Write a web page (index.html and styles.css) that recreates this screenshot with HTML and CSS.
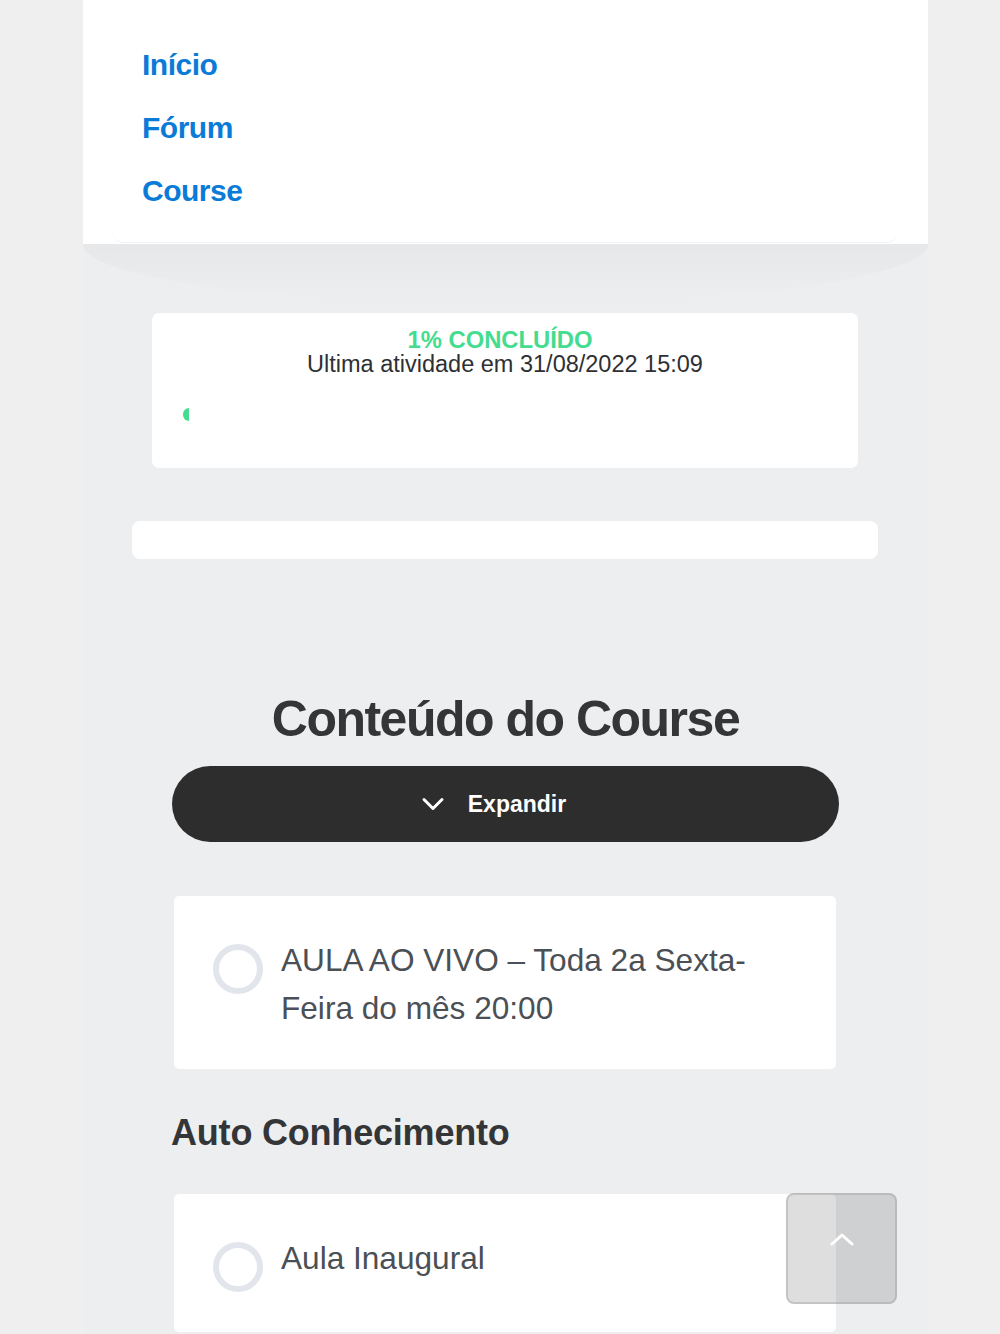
FILE: index.html
```html
<!DOCTYPE html>
<html lang="pt-BR">
<head>
<meta charset="UTF-8">
<meta name="viewport" content="width=device-width, initial-scale=1.0">
<title>Conteúdo do Course</title>
<link rel="stylesheet" href="styles.css">
</head>
<body>
<div id="page">
    <header class="topbar">
        <nav class="menu">
            <a href="javascript:;">Início</a>
            <a href="javascript:;">Fórum</a>
            <a href="javascript:;">Course</a>
        </nav>
    </header>

    <section class="progress-card">
        <p class="progress-pct">1% CONCLUÍDO</p>
        <p class="progress-last">Ultima atividade em 31/08/2022 15:09</p>
        <div class="progress-track">
            <div class="progress-fill" style="width: 1%"></div>
        </div>
    </section>

    <div class="blank-bar"></div>

    <h2 class="content-title">Conteúdo do Course</h2>
    <button class="expand-btn" type="button">
        <svg width="24" height="16" viewBox="0 0 24 16">
            <path d="M3 3.5 L12 12.5 L21 3.5" fill="none" stroke="#fff" stroke-width="3" stroke-linecap="round" stroke-linejoin="round"/>
        </svg>
        <span>Expandir</span>
    </button>

    <ul class="lessons">
        <li class="lesson">
            <span class="ring"></span>
            <span class="lesson-name">AULA AO VIVO – Toda 2a Sexta-Feira do mês 20:00</span>
        </li>
        <li class="section-title">Auto Conhecimento</li>
        <li class="lesson">
            <span class="ring"></span>
            <span class="lesson-name">Aula Inaugural</span>
        </li>
    </ul>
</div>
<a href="javascript:;" class="to-top">
    <svg width="26" height="14" viewBox="0 0 26 14">
        <path d="M3 12 L13 3 L23 12" fill="none" stroke="#fff" stroke-width="3" stroke-linecap="round" stroke-linejoin="round"/>
    </svg>
</a>
</body>
</html>
```

FILE: styles.css
```css
body {
    margin: 0;
    background: #efefef;
    font-family: "Liberation Sans", Arial, sans-serif;
}
p {
    margin: 0;
}
ul {
    margin: 0;
    padding: 0;
    list-style: none;
}
#page {
    width: 845px;
    min-height: 1334px;
    margin-left: 83px;
    padding-bottom: 40px;
    background: #edeef0;
    overflow: hidden;
}
.topbar {
    position: relative;
    background: #fff;
    padding: 13px 31px 1px 30px;
}
/* soft shade under the menu */
.topbar::after {
    content: "";
    position: absolute;
    left: 0;
    right: 0;
    top: 100%;
    height: 60px;
    background: linear-gradient(rgba(0, 0, 0, .026), rgba(0, 0, 0, 0));
    border-radius: 0 0 50% 50% / 0 0 100% 100%;
}
.menu {
    background: #fff;
    border-radius: 0 0 10px 10px;
    padding: 20px 29px;
    border-bottom: 1px solid #f1f2f3;
}
.menu a {
    display: block;
    font-size: 30px;
    line-height: 63px;
    font-weight: bold;
    letter-spacing: -.5px;
    color: #0b7bd8;
    text-decoration: none;
}
.progress-card {
    margin: 69px 70px 0 69px;
    padding: 14px 31px 47px;
    background: #fff;
    border-radius: 7px;
    text-align: center;
}
.progress-pct {
    padding-right: 10px;
    font-size: 23.8px;
    line-height: 25px;
    font-weight: bold;
    color: #44dc8e;
}
.progress-last {
    font-size: 23.5px;
    line-height: 25px;
    color: #2e3033;
}
.progress-track {
    margin-top: 31px;
    height: 13px;
}
.progress-fill {
    height: 13px;
    background: #44dc8e;
    border-radius: 7px 0 0 7px;
}
.blank-bar {
    margin: 53px 50px 0 49px;
    height: 38px;
    background: #fff;
    border-radius: 8px;
}
.content-title {
    margin: 130px 0 0;
    font-size: 50px;
    line-height: 60px;
    letter-spacing: -1.5px;
    color: #333537;
    text-align: center;
}
.expand-btn {
    display: flex;
    align-items: center;
    justify-content: center;
    gap: 23px;
    width: 667px;
    height: 76px;
    margin: 17px 0 0 89px;
    padding: 0 24px 0 0;
    border: 0;
    border-radius: 38px;
    background: #2d2d2e;
    color: #fff;
    font: bold 23px "Liberation Sans", Arial, sans-serif;
    cursor: pointer;
}
.lessons {
    margin: 54px 92px 0 91px;
}
.lesson {
    display: flex;
    align-items: flex-start;
    gap: 18px;
    min-height: 138px;
    box-sizing: border-box;
    padding: 40px 40px 37px 39px;
    background: #fff;
    border-radius: 5px;
}
.ring {
    flex: none;
    width: 38px;
    height: 38px;
    margin-top: 8px;
    border: 6px solid #e2e6ec;
    border-radius: 50%;
}
.lesson-name {
    font-size: 31.6px;
    line-height: 48px;
    color: #4a5055;
}
.section-title {
    margin: 43px 0 40px -3px;
    font-size: 36px;
    line-height: 42px;
    font-weight: bold;
    letter-spacing: -.2px;
    color: #333537;
}
.to-top {
    position: fixed;
    right: 103px;
    bottom: 30px;
    display: flex;
    align-items: center;
    justify-content: center;
    width: 107px;
    height: 87px;
    padding-bottom: 20px;
    border: 2px solid rgba(150, 150, 150, .35);
    border-radius: 8px;
    background: rgba(60, 60, 60, .17);
}
```
